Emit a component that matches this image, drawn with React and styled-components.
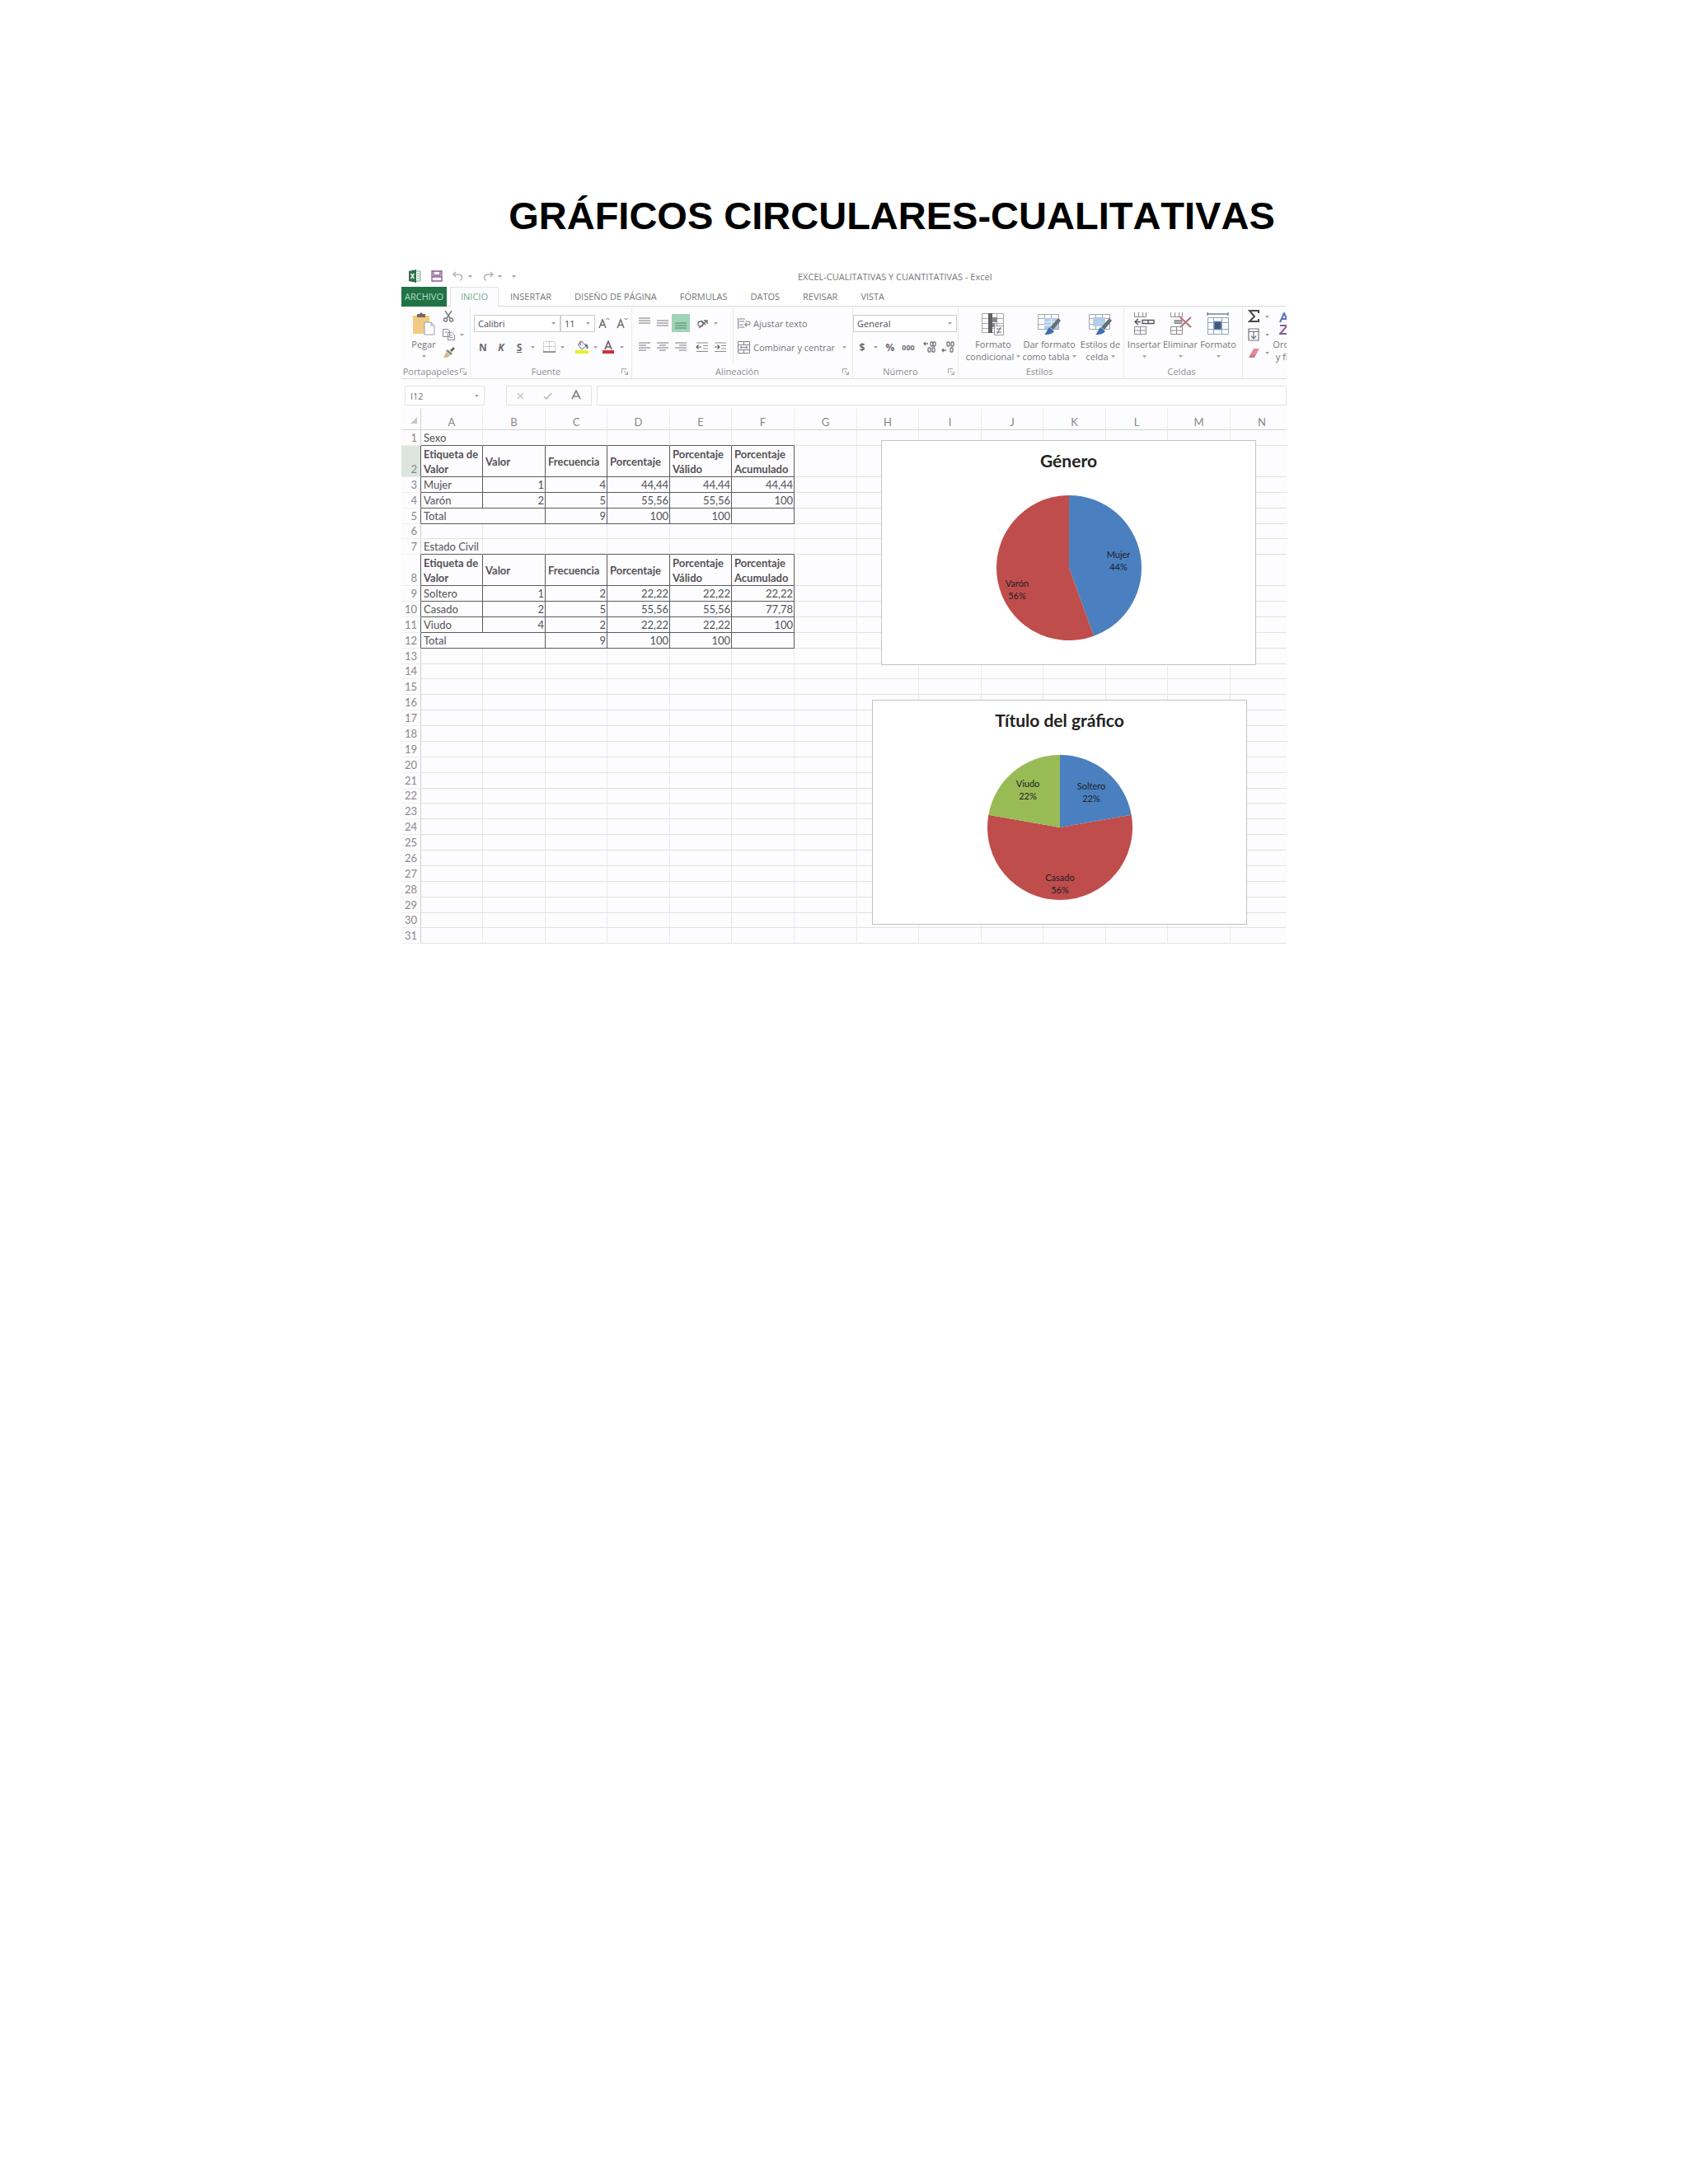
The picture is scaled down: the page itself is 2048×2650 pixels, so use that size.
import React from 'react';
import styled, { createGlobalStyle } from 'styled-components';

const GlobalStyle = createGlobalStyle`
  * {
    box-sizing: border-box;
  }

  body {
    margin: 0;
    background: #fff;
  }

  button, input, select {
    font: inherit;
    color: inherit;
    margin: 0;
    padding: 0;
    border: 0;
    background: none;
  }
`;

const Page = styled.main`
  min-height: 100vh;
  padding: 232px 24px 0;
  background: #fff;
`;

const PageTitle = styled.h1`
  max-width: 1074px;
  margin: 0 auto 30px;
  padding-left: 116px;
  font: bold 47px/60px 'Liberation Sans', Arial, sans-serif;
  font-kerning: none;
  color: #000;
  text-align: center;
  white-space: nowrap;
`;

const ExcelWindow = styled.section`
  max-width: 1074px;
  margin: 0 auto;
  overflow: hidden;
  background: #fdfcfe;
  font: 11px/15px 'Open Sans', 'Noto Sans', sans-serif;
  color: #77757a;
`;

const TitleBar = styled.header`
  display: flex;
  align-items: center;
  height: 26px;
  padding: 0 9px;
  background: #fff;
`;

const QuickAccess = styled.div`
  display: flex;
  align-items: center;
  gap: 12px;
  flex: 0 0 472px;
`;

const QuickButton = styled.button`
  display: flex;
  align-items: center;
  gap: 5px;
  height: 18px;
`;

const DocumentName = styled.span`
  padding-top: 1px;
  white-space: nowrap;
`;

const TabStrip = styled.nav`
  display: flex;
  height: 24px;
  background: #fff;
  border-bottom: 1px solid #dddbde;
`;

const Tab = styled.button`
  height: 24px;
  padding: 0 ${props => (props.$file ? '0' : props.$active ? '12px' : '14px')} 2px;
  width: ${props => (props.$file ? '55px' : 'auto')};
  margin-right: ${props => (props.$file ? '4px' : '0')};
  background: ${props => (props.$file ? '#217346' : props.$active ? '#fdfcfe' : 'none')};
  color: ${props => (props.$file ? '#b5dcc5' : props.$active ? '#6fae8b' : '#77757a')};
  border: solid #e4e2e6;
  border-width: ${props => (props.$active ? '1px 1px 0' : '0')};
`;

const RibbonBar = styled.div`
  display: flex;
  height: 88px;
  border-bottom: 1px solid #dddbde;
`;

const Group = styled.section`
  display: flex;
  flex-direction: column;
  flex: 0 0 ${props => props.$w}px;
  border-right: 1px solid #eceaee;
`;

const GroupBody = styled.div`
  display: flex;
  height: 70px;
  padding-left: ${props => props.$pad || 0}px;
`;

const GroupLabel = styled.footer`
  display: flex;
  align-items: center;
  height: 17px;
  padding: 0 4px 0 0;
  color: #8f8d92;

  span {
    flex: 1;
    text-align: center;
  }
`;

const Rows = styled.div`
  display: flex;
  flex-direction: column;
  gap: 7px;
  padding: 9px ${props => props.$end || 0}px 0 0;
  margin-right: ${props => (props.$divided ? '5px' : '0')};
  border-right: ${props => (props.$divided ? '1px solid #eceaee' : '0')};
`;

const Row = styled.div`
  display: flex;
  align-items: center;
  height: 22px;
`;

const SmallStack = styled.div`
  display: flex;
  flex-direction: column;
  padding-top: 1px;
`;

const Tool = styled.button`
  display: flex;
  align-items: center;
  justify-content: center;
  width: ${props => (props.$caret ? '10px' : '22px')};
  height: 22px;
  margin-right: ${props => props.$gap || 0}px;
  background: ${props => (props.$on ? '#9fd5b7' : 'none')};
  font-size: ${props => (props.$small ? '9px' : '12px')};
  font-weight: 700;
  font-style: ${props => (props.$italic ? 'italic' : 'normal')};
  text-decoration: ${props => (props.$underline ? 'underline' : 'none')};
  color: #6d6b70;
`;

const TextTool = styled.button`
  display: flex;
  align-items: center;
  gap: 3px;
  height: 22px;
  white-space: nowrap;

  svg:last-child:not(:first-child) {
    margin-left: 6px;
  }
`;

const BigTool = styled.button`
  display: flex;
  flex-direction: column;
  align-items: center;
  flex: 0 0 ${props => props.$w}px;
  padding-top: 7px;
  white-space: nowrap;

  > svg {
    margin-bottom: 3px;
  }

  span {
    display: flex;
    align-items: center;
    gap: 3px;
    height: 15px;
  }
`;

const Combo = styled.label`
  position: relative;
  display: flex;
  align-items: center;
  width: ${props => props.$w}px;
  height: 21px;
  background: #fff;
  border: 1px solid #cfcdd1;
  color: #4d4b50;

  select {
    appearance: none;
    width: 100%;
    padding-left: 4px;
  }

  svg {
    position: absolute;
    right: 5px;
    pointer-events: none;
  }
`;

const FormulaBar = styled.div`
  display: flex;
  gap: 6px;
  height: 36px;
  padding: 8px 0 4px 4px;
`;

const NameBox = styled.label`
  display: flex;
  align-items: center;
  width: 97px;
  margin-right: 20px;
  padding: 0 6px;
  border: 1px solid #e4e2e6;
  background: #fff;

  input {
    flex: 1;
    min-width: 0;
  }
`;

const FormulaActions = styled.div`
  display: flex;
  align-items: center;
  justify-content: space-around;
  width: 104px;
  border: 1px solid #e4e2e6;
`;

const FormulaInput = styled.input`
  flex: 1;
  background: #fff;
  border: 1px solid #e4e2e6;
`;

const SheetArea = styled.div`
  position: relative;
`;

const SheetTable = styled.table`
  width: calc(100% + 9px);
  table-layout: fixed;
  border-collapse: separate;
  border-spacing: 0;
  font: 13px/18px Lato, Carlito, sans-serif;
  color: #545257;
`;

const SheetRow = styled.tr`
  height: ${props => (props.$tall ? '38px' : '19px')};

  &:nth-child(8n + 6) {
    height: 18px;
    line-height: 17px;
  }
`;

const Corner = styled.td`
  height: 26px;
  padding: 0 4px 3px 0;
  text-align: right;
  vertical-align: bottom;
  border: solid #d4d2d6;
  border-width: 0 1px 1px 0;
`;

const ColumnHead = styled.th`
  height: 26px;
  padding: 6px 0 0;
  font-weight: 400;
  line-height: 18px;
  color: #89878c;
  border: solid #d4d2d6;
  border-width: 0 0 1px;
  border-right: 1px solid #eceaee;
`;

const RowHead = styled.th`
  padding: 0 4px 0 0;
  font-weight: 400;
  text-align: right;
  vertical-align: bottom;
  color: #89878c;
  background: ${props => (props.$active ? '#dce6df' : 'none')};
  border-right: 1px solid ${props => (props.$dark ? '#5c5a5e' : '#cfcdd1')};
  border-bottom: 1px solid #f0eef1;
`;

const Cell = styled.td`
  padding: 0 ${props => (props.$number ? '1px' : '0')} 0 3px;
  font-weight: ${props => (props.$head ? 700 : 400)};
  text-align: ${props => (props.$number ? 'right' : 'left')};
  white-space: ${props => (props.$head ? 'normal' : 'nowrap')};
  border-right: 1px solid ${props => (props.$right ? '#5c5a5e' : '#eae8ec')};
  border-bottom: 1px solid ${props => (props.$bottom ? '#5c5a5e' : '#e2e0e4')};
`;

const ChartCard = styled.figure`
  position: absolute;
  left: ${props => props.$x}px;
  top: ${props => props.$y}px;
  display: flex;
  flex-direction: column;
  align-items: center;
  width: 455px;
  height: 273px;
  margin: 0;
  padding-top: 12px;
  background: #fff;
  border: 1px solid #c3c1c5;
`;

const ChartTitle = styled.figcaption`
  margin-bottom: 30px;
  font: bold 21px/24px Lato, Carlito, sans-serif;
  color: #222;
`;

const PieLabel = styled.text`
  font: 11px Lato, Carlito, sans-serif;
  fill: #1c1c28;
  text-anchor: middle;
`;

const Caret = () => (
  <svg width="5" height="3" viewBox="0 0 5 3"><path d="M0 0h5L2.5 3z" fill="#a3a1a6" /></svg>
);

const Launcher = () => (
  <svg width="8" height="8" viewBox="0 0 8 8" fill="none" stroke="#a3a1a6">
    <path d="M.5 6V.5H6M3 3l4 4M7.500 4v3.500H4" />
  </svg>
);

const ExcelLogo = () => (
  <svg width="15" height="16" viewBox="0 0 15 16">
    <path d="M8 2h6v12H8z" fill="#fff" stroke="#6fa886" />
    <path d="M10 5h3M10 8h3M10 11h3" stroke="#6fa886" />
    <path d="M0 2l9-2v16l-9-2z" fill="#2e6f4a" />
    <path d="M2.500 5l4 6M6.500 5l-4 6" stroke="#e6f2ea" strokeWidth="1.500" />
  </svg>
);

const SaveIcon = () => (
  <svg width="14" height="14" viewBox="0 0 14 14" fill="none" stroke="#8d5a8c" strokeWidth="1.300">
    <path d="M1 1h12v12H1zM3 1v5h8V1M1 8h12" />
  </svg>
);

const UndoIcon = ({ flip }) => (
  <svg width="14" height="12" viewBox="0 0 14 12" fill="none" stroke="#b5b3bb" strokeWidth="1.500">
    <path d={flip ? 'M10 1l3 3-3 3M13 4H7C1 4 2 11 5 11' : 'M4 1L1 4l3 3M1 4h6c6 0 5 7 2 7'} />
  </svg>
);

const PasteIcon = () => (
  <svg width="30" height="28" viewBox="0 0 30 28">
    <path d="M2 4h20v22H2z" fill="#efcb83" />
    <path d="M7 2h3l2-2 2 2h3v4H7z" fill="#77685f" />
    <path d="M16 12h8l4 4v11H16z" fill="#fff" stroke="#9a9fb5" />
    <path d="M24 12v4h4" fill="none" stroke="#9a9fb5" />
  </svg>
);

const CutIcon = () => (
  <svg width="14" height="14" viewBox="0 0 14 14" fill="none" stroke="#77757a" strokeWidth="1.400">
    <path d="M3 0l6 9M11 0L5 9" />
    <circle cx="3.500" cy="11" r="2" />
    <circle cx="10.500" cy="11" r="2" />
  </svg>
);

const CopyIcon = () => (
  <svg width="15" height="14" viewBox="0 0 15 14" fill="#fff" stroke="#85889a">
    <path d="M.5.500h6l2 2v7h-8zM6.500 4.500h5l3 3v6h-8zM8.500 8h3M8.500 10.500h4M2.500 4h3" />
  </svg>
);

const BrushIcon = () => (
  <svg width="15" height="14" viewBox="0 0 15 14">
    <path d="M9 4l4-4 2 2-4 4z" fill="#666" />
    <path d="M6 3l6 5-2 2-6-5z" fill="#8b8982" />
    <path d="M4 6l5 4c-2 3-5 3-8 3 2-2 2-5 3-7z" fill="#cdb98d" />
  </svg>
);

const GrowIcon = ({ down }) => (
  <svg width="14" height="14" viewBox="0 0 14 14" fill="none" stroke="#6d6b70" strokeWidth="1.400">
    <path d="M1 13L5 3l4 10M2.500 9.500h5" />
    <path d={down ? 'M9.500 1l2 2 2-2' : 'M9.500 3l2-2 2 2'} strokeWidth="1" />
  </svg>
);

const BorderIcon = () => (
  <svg width="15" height="14" viewBox="0 0 15 14" fill="none" stroke="#a7a5aa">
    <path d="M.5 13V.500h14V13M7.500 0v13M0 6.500h15" strokeDasharray="1 1" />
    <path d="M0 13h15" stroke="#77757a" strokeWidth="1.500" />
  </svg>
);

const FillIcon = () => (
  <svg width="18" height="17" viewBox="0 0 18 17">
    <path d="M4 5l5-4 5 6-5 4z" fill="#eee" stroke="#77777f" />
    <path d="M7 6V1" stroke="#55555c" />
    <path d="M13 5c3 1 3 3 2 5" fill="none" stroke="#5d6e92" strokeWidth="2" />
    <path d="M1 12h16v4H1z" fill="#e6f02c" />
  </svg>
);

const FontColorIcon = () => (
  <svg width="16" height="17" viewBox="0 0 16 17">
    <path d="M4 11l4-10 4 10M5.500 8h5" fill="none" stroke="#77616a" strokeWidth="1.700" />
    <path d="M1 12h14v4H1z" fill="#cf2f3f" />
  </svg>
);

// widths holds one [x, length] pair for each text line
const LinesIcon = ({ widths, y = 2, color = '#8f8d92' }) => (
  <svg width="14" height="14" viewBox="0 0 14 14" stroke={color} strokeWidth="1.200">
    {widths.map(([x, w], i) => <path key={i} d={`M${x} ${y + i * 3}h${w}`} />)}
  </svg>
);

const OrientIcon = () => (
  <svg width="15" height="15" viewBox="0 0 15 15" fill="none" stroke="#6d6b70" strokeWidth="1.300">
    <circle cx="5" cy="8" r="3" />
    <path d="M6 4l5 5M3 13L13 4M9 4h4v4" />
  </svg>
);

const IndentIcon = ({ right }) => (
  <svg width="16" height="13" viewBox="0 0 16 13" fill="none" stroke="#8f8d92" strokeWidth="1.200">
    <path d="M1 1h14M9 4.500h6M9 8h6M1 11.500h14" />
    <path d={right ? 'M1 6h6M4.500 3.500L7 6 4.500 8.500' : 'M7 6H1M3.500 3.500L1 6l2.500 2.500'} stroke="#5f6673" />
  </svg>
);

const DecimalIcon = ({ less }) => (
  <svg width="16" height="15" viewBox="0 0 16 15" fill="none" stroke="#77757c" strokeWidth="1.300">
    <path d={less ? 'M1 11h5M3 9l-2 2 2 2' : 'M6 3H1M3 1L1 3l2 2'} />
    <rect x={less ? 7 : 9} y="1" width="3" height="5" rx="1" />
    <rect x="12" y="1" width="3" height="5" rx="1" />
    <rect x={less ? 11 : 6} y="8" width="3" height="5" rx="1" />
    {!less && <rect x="11" y="8" width="3" height="5" rx="1" />}
  </svg>
);

const WrapIcon = () => (
  <svg width="16" height="15" viewBox="0 0 16 15" fill="none" stroke="#858388" strokeWidth="1.200">
    <path d="M.5 1v13M2 2h7M2 5h6M2 9h5M2 12h6M9.500 5h4c2 0 2 4 0 4H9M11 7L9 9l2 2" />
  </svg>
);

const MergeIcon = () => (
  <svg width="16" height="15" viewBox="0 0 16 15" fill="none" stroke="#858388">
    <path d="M.5.500h14v14H.500zM0 4.500h15M0 10.500h15M7.500 0v4M7.500 11v4M3 7.500h9M5 6L3 7.500 5 9M10 6l2 1.500L10 9" />
  </svg>
);

const CondIcon = () => (
  <svg width="28" height="28" viewBox="0 0 28 28">
    <path d="M.5 1.500h26v23H.500zM0 7.500h27M0 13.500h27M0 19.500h27M18.500 1v24" fill="#fff" stroke="#aaa8ad" />
    <path d="M8 1h5v24H8z" fill="#5e6066" />
    <path d="M13 6h6v6h-6zM13 13h3v5h-3z" fill="#85878f" />
    <path d="M15.500 16.500h11v11h-11z" fill="#fff" stroke="#99979c" />
    <path d="M18 20h6M18 24h6M23 18l-4 8" stroke="#66646a" />
  </svg>
);

const FormatTableIcon = ({ single }) => (
  <svg width="30" height="28" viewBox="0 0 30 28">
    <path d="M1.500 2.500h25v18h-25zM1 7.500h25M1 14.500h25M9.500 2v19M17.500 2v19" fill="#fff" stroke="#a2a5b0" />
    <path d={single ? 'M6 6h15v11H6z' : 'M9 7h17v13H9z'} fill="#b3cce8" />
    {!single && <path d="M9 11.500h17M9 15.500h17M17.500 7v13" stroke="#e7f0f9" />}
    <path d="M26 7l3 3-9 11-4-3z" fill="#64707a" />
    <path d="M15 18l6 5c-3 4-8 4-12 4 3-2 3-6 6-9z" fill="#3a6fb0" />
  </svg>
);

const CellsIcon = ({ kind }) => (
  <svg width="28" height="28" viewBox="0 0 28 28" fill="none" stroke="#8d8b90">
    <path d="M2.500 0v5.500h14V0M7.500 0v5M12.500 0v5M2.500 17.500h14v9h-14zM2 22h15M9.500 17v10" />
    {kind === 'insert' && <path d="M10 11.500H4M7 8l-4 3.500L7 15M12 9.500h14v4H12zM19 9v5" stroke="#55585f" strokeWidth="1.400" />}
    {kind === 'delete' && (
      <>
        <path d="M7 9.500h9v4H7z" fill="#aaa" />
        <path d="M14 6l13 12M27 6L14 18" stroke="#b07378" strokeWidth="2" />
      </>
    )}
  </svg>
);

const FormatCellsIcon = () => (
  <svg width="28" height="28" viewBox="0 0 28 28" fill="#fff" stroke="#8fa3ba">
    <path d="M1 2h25M1 0v4M26 0v4" stroke="#6c86a5" strokeWidth="1.400" />
    <path d="M1.500 6.500h25v20h-25zM1 12.500h25M1 20.500h25M8.500 6v21M18.500 6v21" />
    <path d="M9 11h9v10H9z" fill="#3e5a80" />
  </svg>
);

const SigmaIcon = () => (
  <svg width="14" height="16" viewBox="0 0 14 16" fill="none" stroke="#4c4a50" strokeWidth="2">
    <path d="M13 4V1H2l6 7-6 6h11v-3" />
  </svg>
);

const FillDownIcon = () => (
  <svg width="14" height="16" viewBox="0 0 14 16" fill="none" stroke="#77757a" strokeWidth="1.200">
    <path d="M1 1h12v14H1zM1 4.500h12M7 5v7M4 9.500L7 13l3-3.500" />
  </svg>
);

const EraserIcon = () => (
  <svg width="15" height="13" viewBox="0 0 15 13">
    <path d="M7 1h7l-4 7H3z" fill="#e58a99" />
    <path d="M3 8h7l-2 4H1z" fill="#c9808d" />
  </svg>
);

const SortIcon = () => (
  <svg width="28" height="28" viewBox="0 0 28 28" fill="none" strokeWidth="2">
    <path d="M1 12L6 1l5 11M3 8h6" stroke="#5a6fb5" />
    <path d="M1 16h9L1 26h10" stroke="#8a5a9c" />
    <path d="M20 4v20M16 20l4 4 4-4" stroke="#77757a" />
  </svg>
);

const XIcon = () => (
  <svg width="9" height="9" viewBox="0 0 9 9" stroke="#c9c7cc" strokeWidth="1.500"><path d="M1 1l7 7M8 1L1 8" /></svg>
);

const CheckIcon = () => (
  <svg width="11" height="9" viewBox="0 0 11 9" fill="none" stroke="#b9b7bc" strokeWidth="1.500"><path d="M1 5l3 3 6-7" /></svg>
);

const FxIcon = () => (
  <svg width="12" height="12" viewBox="0 0 12 12" fill="none" stroke="#85838a" strokeWidth="1.700"><path d="M1 11L6 1l5 10M3 8h6" /></svg>
);

const tabs = ['INSERTAR', 'DISEÑO DE PÁGINA', 'FÓRMULAS', 'DATOS', 'REVISAR', 'VISTA'];

const full = [[0, 14], [0, 14], [0, 14]];
const alignments = {
  left: [[0, 14], [0, 9], [0, 14], [0, 9]],
  center: [[0, 14], [3, 8], [0, 14], [3, 8]],
  right: [[0, 14], [5, 9], [0, 14], [5, 9]]
};

const Ribbon = () => (
  <RibbonBar>
    <Group $w={84}>
      <GroupBody $pad={8}>
        <BigTool $w={38}>
          <PasteIcon />
          <span>Pegar</span>
          <span><Caret /></span>
        </BigTool>
        <SmallStack>
          <Row><Tool aria-label="Cortar"><CutIcon /></Tool></Row>
          <Row>
            <Tool aria-label="Copiar"><CopyIcon /></Tool>
            <Tool $caret aria-label="Opciones de copiar"><Caret /></Tool>
          </Row>
          <Row><Tool aria-label="Copiar formato"><BrushIcon /></Tool></Row>
        </SmallStack>
      </GroupBody>
      <GroupLabel><span>Portapapeles</span><Launcher /></GroupLabel>
    </Group>

    <Group $w={196}>
      <GroupBody $pad={4}>
        <Rows>
          <Row>
            <Combo $w={105}>
              <select aria-label="Fuente"><option>Calibri</option></select>
              <Caret />
            </Combo>
            <Combo $w={42}>
              <select aria-label="Tamaño de fuente"><option>11</option></select>
              <Caret />
            </Combo>
            <Tool aria-label="Aumentar fuente"><GrowIcon /></Tool>
            <Tool aria-label="Disminuir fuente"><GrowIcon down /></Tool>
          </Row>
          <Row>
            <Tool>N</Tool>
            <Tool $italic>K</Tool>
            <Tool $underline>S</Tool>
            <Tool $caret $gap={4} aria-label="Opciones de subrayado"><Caret /></Tool>
            <Tool aria-label="Bordes"><BorderIcon /></Tool>
            <Tool $caret $gap={8} aria-label="Opciones de bordes"><Caret /></Tool>
            <Tool aria-label="Color de relleno"><FillIcon /></Tool>
            <Tool $caret aria-label="Opciones de relleno"><Caret /></Tool>
            <Tool aria-label="Color de fuente"><FontColorIcon /></Tool>
            <Tool $caret aria-label="Opciones de color"><Caret /></Tool>
          </Row>
        </Rows>
      </GroupBody>
      <GroupLabel><span>Fuente</span><Launcher /></GroupLabel>
    </Group>

    <Group $w={268}>
      <GroupBody $pad={4}>
        <Rows $divided $end={4}>
          <Row>
            <Tool aria-label="Alinear arriba"><LinesIcon widths={full} y={1} /></Tool>
            <Tool aria-label="Alinear en medio"><LinesIcon widths={full} y={4} /></Tool>
            <Tool $on $gap={4} aria-label="Alinear abajo"><LinesIcon widths={full} y={7} color="#5f8f74" /></Tool>
            <Tool aria-label="Orientación"><OrientIcon /></Tool>
            <Tool $caret aria-label="Opciones de orientación"><Caret /></Tool>
          </Row>
          <Row>
            <Tool aria-label="Izquierda"><LinesIcon widths={alignments.left} /></Tool>
            <Tool aria-label="Centrar"><LinesIcon widths={alignments.center} /></Tool>
            <Tool $gap={4} aria-label="Derecha"><LinesIcon widths={alignments.right} /></Tool>
            <Tool aria-label="Disminuir sangría"><IndentIcon /></Tool>
            <Tool aria-label="Aumentar sangría"><IndentIcon right /></Tool>
          </Row>
        </Rows>
        <Rows>
          <TextTool><WrapIcon />Ajustar texto</TextTool>
          <TextTool><MergeIcon />Combinar y centrar<Caret /></TextTool>
        </Rows>
      </GroupBody>
      <GroupLabel><span>Alineación</span><Launcher /></GroupLabel>
    </Group>

    <Group $w={128}>
      <GroupBody>
        <Rows>
          <Row>
            <Combo $w={126}>
              <select aria-label="Formato de número"><option>General</option></select>
              <Caret />
            </Combo>
          </Row>
          <Row>
            <Tool>$</Tool>
            <Tool $caret $gap={2} aria-label="Opciones de moneda"><Caret /></Tool>
            <Tool>%</Tool>
            <Tool $small $gap={4}>000</Tool>
            <Tool aria-label="Aumentar decimales"><DecimalIcon /></Tool>
            <Tool aria-label="Disminuir decimales"><DecimalIcon less /></Tool>
          </Row>
        </Rows>
      </GroupBody>
      <GroupLabel><span>Número</span><Launcher /></GroupLabel>
    </Group>

    <Group $w={201}>
      <GroupBody $pad={8}>
        <BigTool $w={68}>
          <CondIcon />
          <span>Formato</span>
          <span>condicional<Caret /></span>
        </BigTool>
        <BigTool $w={68}>
          <FormatTableIcon />
          <span>Dar formato</span>
          <span>como tabla<Caret /></span>
        </BigTool>
        <BigTool $w={56}>
          <FormatTableIcon single />
          <span>Estilos de</span>
          <span>celda<Caret /></span>
        </BigTool>
      </GroupBody>
      <GroupLabel><span>Estilos</span></GroupLabel>
    </Group>

    <Group $w={144}>
      <GroupBody $pad={2}>
        <BigTool $w={44}>
          <CellsIcon kind="insert" />
          <span>Insertar</span>
          <span><Caret /></span>
        </BigTool>
        <BigTool $w={44}>
          <CellsIcon kind="delete" />
          <span>Eliminar</span>
          <span><Caret /></span>
        </BigTool>
        <BigTool $w={48}>
          <FormatCellsIcon />
          <span>Formato</span>
          <span><Caret /></span>
        </BigTool>
      </GroupBody>
      <GroupLabel><span>Celdas</span></GroupLabel>
    </Group>

    <Group $w={160}>
      <GroupBody $pad={2}>
        <SmallStack>
          <Row>
            <Tool aria-label="Autosuma"><SigmaIcon /></Tool>
            <Tool $caret aria-label="Opciones de autosuma"><Caret /></Tool>
          </Row>
          <Row>
            <Tool aria-label="Rellenar"><FillDownIcon /></Tool>
            <Tool $caret aria-label="Opciones de rellenar"><Caret /></Tool>
          </Row>
          <Row>
            <Tool aria-label="Borrar"><EraserIcon /></Tool>
            <Tool $caret aria-label="Opciones de borrar"><Caret /></Tool>
          </Row>
        </SmallStack>
        <BigTool $w={48}>
          <SortIcon />
          <span>Ordenar</span>
          <span>y filtrar</span>
        </BigTool>
      </GroupBody>
    </Group>
  </RibbonBar>
);

const columns = [
  ['A', 75], ['B', 76], ['C', 75], ['D', 76], ['E', 75], ['F', 76], ['G', 76],
  ['H', 75], ['I', 76], ['J', 75], ['K', 76], ['L', 75], ['M', 76], ['N']
];

const heads = ['Etiqueta de Valor', 'Valor', 'Frecuencia', 'Porcentaje', 'Porcentaje Válido', 'Porcentaje Acumulado'];

const sheet = {
  1: ['Sexo'],
  2: heads,
  3: ['Mujer', '1', '4', '44,44', '44,44', '44,44'],
  4: ['Varón', '2', '5', '55,56', '55,56', '100'],
  5: ['Total', '9', '100', '100', ''],
  7: ['Estado Civil'],
  8: heads,
  9: ['Soltero', '1', '2', '22,22', '22,22', '22,22'],
  10: ['Casado', '2', '5', '55,56', '55,56', '77,78'],
  11: ['Viudo', '4', '2', '22,22', '22,22', '100'],
  12: ['Total', '9', '100', '100', '']
};

const rowNumbers = Array.from({ length: 31 }, (_, i) => i + 1);

const SheetLine = ({ number }) => {
  const values = sheet[number] || [];
  const isHead = values === heads;
  const inTable = values.length > 1;
  const isTotal = values[0] === 'Total';
  // the line above a table draws its top edge
  const bottom = inTable || values.length === 1;
  const used = isTotal ? 5 : 6;
  const count = isTotal ? columns.length - 1 : columns.length;

  return (
    <SheetRow $tall={isHead}>
      <RowHead scope="row" $active={number === 2} $dark={inTable}>{number}</RowHead>
      {Array.from({ length: count }, (_, i) => (
        <Cell
          key={i}
          colSpan={isTotal && i === 0 ? 2 : 1}
          $head={isHead}
          $number={inTable && !isHead && i > 0}
          $right={inTable && i < used}
          $bottom={bottom && i < used}
        >
          {values[i]}
        </Cell>
      ))}
    </SheetRow>
  );
};

const slicePath = (from, to) => {
  const point = part => {
    const angle = part * 2 * Math.PI;
    return `${88 + 88 * Math.sin(angle)} ${88 - 88 * Math.cos(angle)}`;
  };
  return `M88 88L${point(from)}A88 88 0 ${to - from > 0.5 ? 1 : 0} 1 ${point(to)}Z`;
};

const charts = [
  {
    title: 'Género',
    x: 582,
    y: 38,
    slices: [
      { name: 'Mujer', percent: '44%', from: 0, to: 0.4444, color: '#4a80bf', lx: 148, ly: 76 },
      { name: 'Varón', percent: '56%', from: 0.4444, to: 1, color: '#bf4d4b', lx: 25, ly: 111 }
    ]
  },
  {
    title: 'Título del gráfico',
    x: 571,
    y: 353,
    slices: [
      { name: 'Soltero', percent: '22%', from: 0, to: 0.2222, color: '#4a80bf', lx: 126, ly: 42 },
      { name: 'Casado', percent: '56%', from: 0.2222, to: 0.7778, color: '#bf4d4b', lx: 88, ly: 153 },
      { name: 'Viudo', percent: '22%', from: 0.7778, to: 1, color: '#98bb55', lx: 49, ly: 39 }
    ]
  }
];

const PieChart = ({ title, x, y, slices }) => (
  <ChartCard $x={x} $y={y}>
    <ChartTitle>{title}</ChartTitle>
    <svg width="176" height="176" viewBox="0 0 176 176">
      {slices.map(slice => (
        <g key={slice.name}>
          <path d={slicePath(slice.from, slice.to)} fill={slice.color} />
          <PieLabel x={slice.lx} y={slice.ly}>{slice.name}</PieLabel>
          <PieLabel x={slice.lx} y={slice.ly + 15}>{slice.percent}</PieLabel>
        </g>
      ))}
    </svg>
  </ChartCard>
);

const App = () => (
  <>
    <GlobalStyle />
    <Page>
      <PageTitle>GRÁFICOS CIRCULARES-CUALITATIVAS</PageTitle>
      <ExcelWindow>
        <TitleBar>
          <QuickAccess>
            <ExcelLogo />
            <QuickButton aria-label="Guardar"><SaveIcon /></QuickButton>
            <QuickButton aria-label="Deshacer"><UndoIcon /><Caret /></QuickButton>
            <QuickButton aria-label="Rehacer"><UndoIcon flip /><Caret /></QuickButton>
            <QuickButton aria-label="Personalizar"><Caret /></QuickButton>
          </QuickAccess>
          <DocumentName>EXCEL-CUALITATIVAS Y CUANTITATIVAS - Excel</DocumentName>
        </TitleBar>
        <TabStrip>
          <Tab $file>ARCHIVO</Tab>
          <Tab $active>INICIO</Tab>
          {tabs.map(tab => <Tab key={tab}>{tab}</Tab>)}
        </TabStrip>
        <Ribbon />
        <FormulaBar>
          <NameBox>
            <input aria-label="Cuadro de nombres" defaultValue="I12" />
            <Caret />
          </NameBox>
          <FormulaActions>
            <button aria-label="Cancelar"><XIcon /></button>
            <button aria-label="Introducir"><CheckIcon /></button>
            <button aria-label="Insertar función"><FxIcon /></button>
          </FormulaActions>
          <FormulaInput aria-label="Barra de fórmulas" />
        </FormulaBar>
        <SheetArea>
          <SheetTable>
            <colgroup>
              <col width="24" />
              {columns.map(([name, width]) => <col key={name} width={width} />)}
            </colgroup>
            <thead>
              <tr>
                <Corner>
                  <svg width="8" height="8" viewBox="0 0 8 8"><path d="M8 0v8H0z" fill="#c9c7cc" /></svg>
                </Corner>
                {columns.map(([name]) => <ColumnHead key={name} scope="col">{name}</ColumnHead>)}
              </tr>
            </thead>
            <tbody>
              {rowNumbers.map(number => <SheetLine key={number} number={number} />)}
            </tbody>
          </SheetTable>
          {charts.map(chart => <PieChart key={chart.title} {...chart} />)}
        </SheetArea>
      </ExcelWindow>
    </Page>
  </>
);

export default App;
